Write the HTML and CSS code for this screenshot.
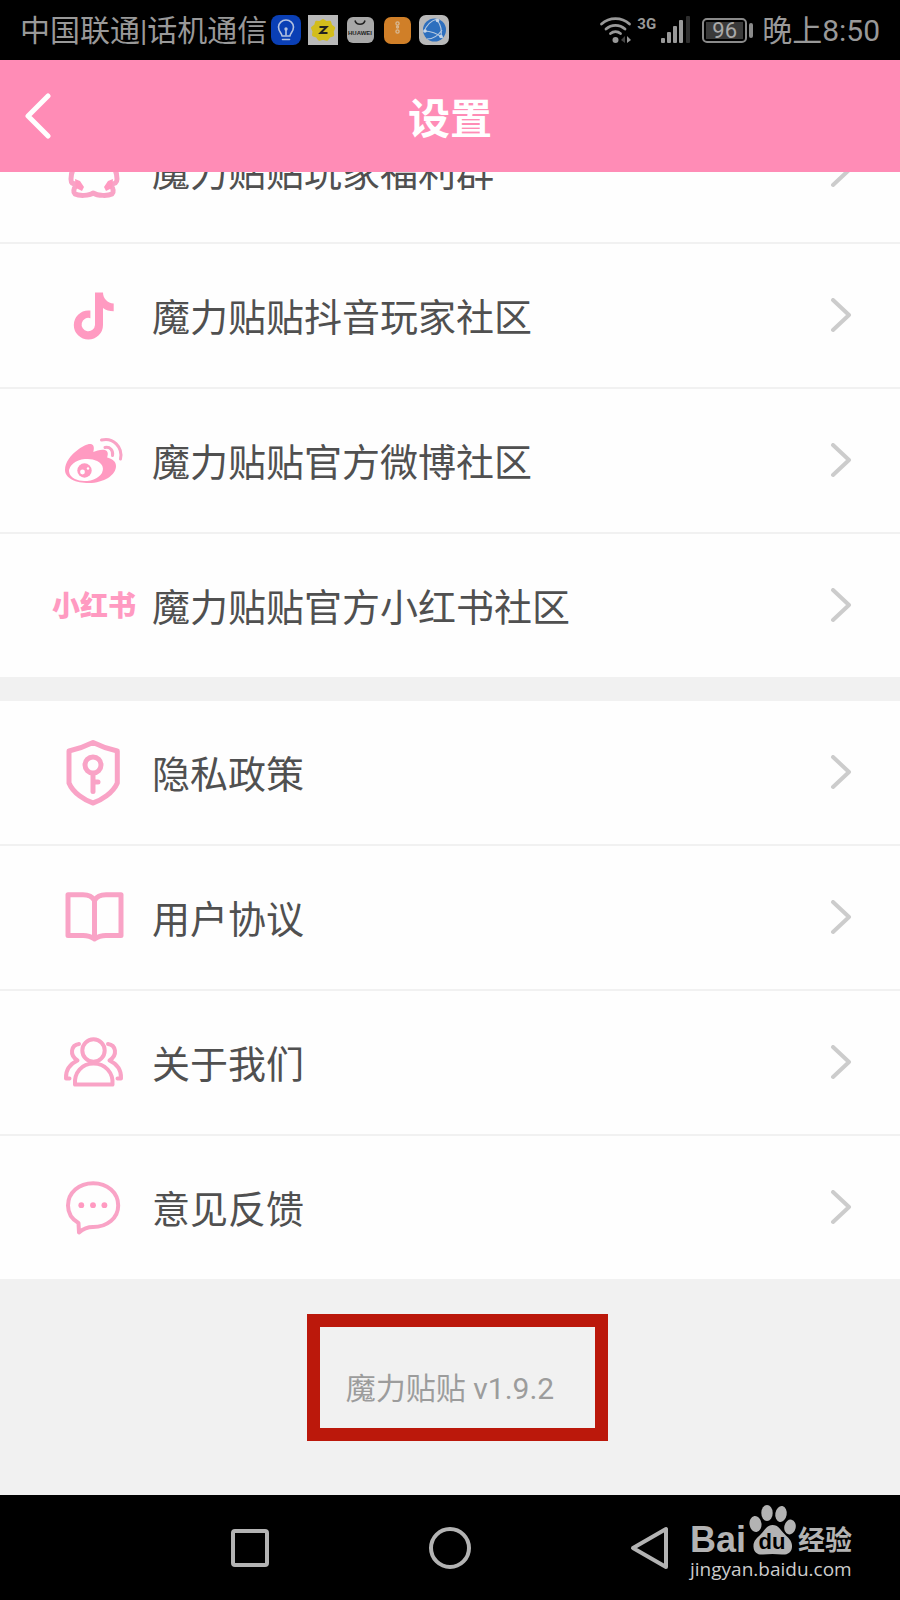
FILE: index.html
```html
<!DOCTYPE html>
<html lang="zh-CN">
<head>
<meta charset="utf-8">
<meta name="viewport" content="width=device-width, initial-scale=1">
<title>设置</title>
<link rel="stylesheet" href="styles.css">
</head>
<body>
<div class="status">
  <div class="status-side">
    <span class="carrier">中国联通|话机通信</span>
    <div class="apps">
      <svg width="30" height="30" viewBox="0 0 30 30"><rect width="30" height="30" rx="8" fill="#0a3fb5"/><g fill="none" stroke="#b4c2e0" stroke-width="1.6" stroke-linecap="round" stroke-linejoin="round"><path d="M11 21c0-3-3.500-4-3.500-9a7.500 7 0 0 1 15 0c0 5-3.500 6-3.500 9z"/><path d="M11.500 24.500h7M15 20v-5"/></g><circle cx="15" cy="14" r="1.700" fill="#b4c2e0"/></svg>
      <svg width="30" height="30" viewBox="0 0 30 30"><path fill="#b9b9b9" d="M0 0h30v30H0z"/><path fill="#d3bd1c" stroke="#d3bd1c" stroke-width="3" stroke-linejoin="round" d="M15 5.500l3 2 3.700-.2 1 3.500 3 2.200-1.500 3.400.5 3.600-3.500 1.200-2.400 3-3.800-1-3.800 1-2.200-3-3.500-1.200.5-3.600L4.500 13l3-2.200 1-3.500 3.500.2z"/><path d="M11.500 12h7l-6 6h7" fill="none" stroke="#222" stroke-width="2"/></svg>
      <svg width="30" height="30" viewBox="0 0 30 30"><rect x="2" y="2" width="27" height="26" rx="6" fill="#a8a8a8"/><path d="M10 5.500a5.200 5.200 0 0 0 10 0" fill="none" stroke="#222" stroke-width="1.600"/><text class="app-name" x="15" y="20" text-anchor="middle" fill="#222">HUAWEI</text></svg>
      <svg width="30" height="30" viewBox="0 0 30 30"><rect x="2" y="2" width="27" height="27" rx="7" fill="#d07f28"/><g fill="none" stroke="#d8b893" stroke-width="1.300"><circle cx="15.500" cy="8.500" r="1.600"/><circle cx="15.500" cy="12" r="1"/><circle cx="15.500" cy="16.500" r="1.600"/></g></svg>
      <svg width="30" height="30" viewBox="0 0 30 30"><rect width="30" height="30" rx="7" fill="#b9b9b9"/><circle cx="15.500" cy="15" r="11.500" fill="#2d6fbe"/><g fill="none" stroke="#b4c8e0" stroke-width="1.200"><path d="M18 4c-7 2-11 7-13 13M5 16c7 0 14 3 19 7M18 5c4 5 5 11 4 17M8 24c5 0 11-3 15-9"/></g><g fill="#c5d5e8"><circle cx="18.500" cy="5.500" r="1.800"/><circle cx="6" cy="16" r="1.800"/><circle cx="22" cy="21.500" r="1.800"/></g></svg>
    </div>
  </div>
  <div class="status-side">
    <div class="signals">
      <svg width="34" height="30" viewBox="0 0 34 30"><g fill="none" stroke="#999" stroke-width="2.800" stroke-linecap="round"><path d="M2.500 9a21 21 0 0 1 28 0M7 14a14 14 0 0 1 19 0M11.500 18.500a8 8 0 0 1 10 0"/></g><circle cx="16.500" cy="25" r="3" fill="#999"/><path fill="#444" d="M26 21v7l-4-3z"/><path fill="#999" d="M28 21v7l4-3z"/></svg>
      <span class="net">3G</span>
      <svg width="30" height="30" viewBox="0 0 30 30"><g fill="#999"><rect x="1" y="23" width="4" height="5" rx="1"/><rect x="7" y="17" width="4" height="11" rx="1"/><rect x="13" y="11" width="4" height="17" rx="1"/><rect x="19" y="5" width="4" height="23" rx="1"/></g><rect x="26" y="1" width="4" height="27" rx="1" fill="#2e2e2e"/></svg>
    </div>
    <div class="battery"><span>96</span></div>
    <time>晚上8:50</time>
  </div>
</div>

<header class="bar">
  <button class="back" type="button" aria-label="返回"><svg width="28" height="46" viewBox="0 0 28 46"><path d="M24 3L4 23l20 20" fill="none" stroke="#fff" stroke-width="5" stroke-linecap="round" stroke-linejoin="round"/></svg></button>
  <h1>设置</h1>
</header>

<main class="view">
  <ul class="group scrolled">
    <li><a class="row" href="#group">
      <span class="icon"><svg width="64" height="72" viewBox="0 0 64 72"><path class="line" d="M32 6C20 6 16 15 16 25 12 31 9 36 9 44c0 4 1 5 6 5-3 4-4 8-2 10 4 2 14 2 18-1 5 3 15 3 19 1 2-2 1-6-2-10 5 0 7-1 7-5 0-8-3-13-7-19C48 15 44 6 32 6z"/><path class="solid" d="M13 44l5 2 4 6-2 4-6-3zM51 44l-5 2-4 6 2 4 6-3z"/></svg></span>
      <span class="label">魔力贴贴玩家福利群</span>
      <svg class="go" width="22" height="36" viewBox="0 0 22 36"><path d="M3 2l16 15L3 32"/></svg></a></li>
    <li><a class="row" href="#douyin">
      <span class="icon"><svg width="64" height="72" viewBox="0 0 64 72"><path class="solid" d="M33 12.500h8c0 6 4.500 10.500 10.700 11v7.800c-4 0-8-1.200-10.700-3.300V45a14.600 14.600 0 1 1-14.600-14.600l2 .1v7.700a6.700 6.700 0 1 0 4.600 6.800z"/></svg></span>
      <span class="label">魔力贴贴抖音玩家社区</span>
      <svg class="go" width="22" height="36" viewBox="0 0 22 36"><path d="M3 2l16 15L3 32"/></svg></a></li>
    <li><a class="row" href="#weibo">
      <span class="icon"><svg width="64" height="72" viewBox="0 0 64 72"><path class="solid" d="M3 45C3 37 9 30 15 25.500c6-4.500 12-7.500 15-6 2.500 1.200 2 5 1.300 7.500 4-2 11-3.500 13.500-1 1.600 1.700 1 4 .3 6.500C50 34 54 36 54 41c0 9-12 17-27 17C14 58 3 53.500 3 45z"/><ellipse cx="24" cy="45" rx="17" ry="11" transform="rotate(-6 24 45)" fill="#fff"/><circle class="solid" cx="22.500" cy="45.500" r="7.200"/><circle cx="20.500" cy="47" r="2.400" fill="#fff"/><circle cx="26" cy="43.500" r="1.200" fill="#fff"/><path class="line thin" d="M43 22.500c5-1 8.500 3 7.500 8M39.500 15C51 12 61 22 58.500 34"/></svg></span>
      <span class="label">魔力贴贴官方微博社区</span>
      <svg class="go" width="22" height="36" viewBox="0 0 22 36"><path d="M3 2l16 15L3 32"/></svg></a></li>
    <li><a class="row" href="#xiaohongshu">
      <span class="icon brand">小红书</span>
      <span class="label">魔力贴贴官方小红书社区</span>
      <svg class="go" width="22" height="36" viewBox="0 0 22 36"><path d="M3 2l16 15L3 32"/></svg></a></li>
  </ul>

  <ul class="group">
    <li><a class="row" href="#privacy">
      <span class="icon"><svg width="64" height="72" viewBox="0 0 64 72"><g class="line"><path d="M31 5.500C24 9 14 12.500 7 14v32c4 10 16 17.500 24 20 8-2.500 20-10 24.300-20V14C48 12.500 38 9 31 5.500z"/><circle cx="31" cy="28" r="8"/><path d="M31 36.500v18M31 45h5"/></g></svg></span>
      <span class="label">隐私政策</span>
      <svg class="go" width="22" height="36" viewBox="0 0 22 36"><path d="M3 2l16 15L3 32"/></svg></a></li>
    <li><a class="row" href="#terms">
      <span class="icon"><svg width="64" height="72" viewBox="0 0 64 72"><path class="line" d="M32.500 18.500C30 14 26 12.800 21 12.800H6v40.700h15c5 0 8 1 11.500 3.500C36 54.500 39 53.500 44 53.500h15V12.800H44c-5 0-9 1.200-11.500 5.700zV56"/></svg></span>
      <span class="label">用户协议</span>
      <svg class="go" width="22" height="36" viewBox="0 0 22 36"><path d="M3 2l16 15L3 32"/></svg></a></li>
    <li><a class="row" href="#about">
      <span class="icon"><svg width="64" height="72" viewBox="0 0 64 72"><g class="line people"><circle cx="31.500" cy="23.500" r="11.200"/><path d="M13 57.500c-1-12 7-21 18.500-21s20 9 19 21z"/><path d="M17 17c-8 1-10 11-1.500 16.500C8 37 3.500 43 4 51.500h3.500M46 17c8 1 10 11 1.500 16.500C55 37 59.500 43 59 51.500h-3.500"/></g></svg></span>
      <span class="label">关于我们</span>
      <svg class="go" width="22" height="36" viewBox="0 0 22 36"><path d="M3 2l16 15L3 32"/></svg></a></li>
    <li><a class="row" href="#feedback">
      <span class="icon"><svg width="64" height="72" viewBox="0 0 64 72"><path class="line people" d="M16.500 51C9.500 47 6 40.500 6 33.500c0-13 11-22.300 25.200-22.300s25 9.600 25 22.300S45 55 31 55c-6 0-10 2-14 5.500z"/><g class="solid"><circle cx="19.300" cy="33.200" r="2.900"/><circle cx="31" cy="33.200" r="2.900"/><circle cx="42.400" cy="33.200" r="2.900"/></g></svg></span>
      <span class="label">意见反馈</span>
      <svg class="go" width="22" height="36" viewBox="0 0 22 36"><path d="M3 2l16 15L3 32"/></svg></a></li>
  </ul>

  <footer class="version">
    <p>魔力贴贴 v1.9.2</p>
    <div class="mark"></div>
  </footer>
</main>

<nav class="keys">
  <button type="button" aria-label="最近任务"><svg width="44" height="44" viewBox="0 0 44 44"><rect x="5" y="5" width="34" height="34" rx="2"/></svg></button>
  <button type="button" aria-label="主屏幕"><svg width="44" height="44" viewBox="0 0 44 44"><circle cx="22" cy="22" r="19"/></svg></button>
  <button type="button" aria-label="返回"><svg width="44" height="44" viewBox="0 0 44 44"><path d="M38 3v38L5 22z"/></svg></button>
  <div class="watermark">
    <div class="wm-top">
      <span class="wm-bai">Bai</span>
      <span class="wm-paw"><svg width="48" height="52" viewBox="0 0 48 52"><g fill="#b3b3b3"><ellipse cx="7.500" cy="20" rx="6" ry="8" transform="rotate(-8 7.500 20)"/><ellipse cx="19" cy="9" rx="5.700" ry="8"/><ellipse cx="33" cy="10" rx="5.700" ry="8" transform="rotate(10 33 10)"/><ellipse cx="42" cy="23" rx="5.700" ry="7.500" transform="rotate(12 42 23)"/><path d="M24.500 21c6 0 8 5 12 9s8 7 7.500 13c-.5 6-5 8-10 7.500-6-.8-13-.8-19 0C10 51 6 49 5.500 43 5 37 9 34 13 30s6-9 11.500-9z"/></g></svg><span class="wm-du">du</span></span>
      <span class="wm-exp">经验</span>
    </div>
    <span class="wm-url">jingyan.baidu.com</span>
  </div>
</nav>
</body>
</html>
```
FILE: styles.css
```css
* {
  box-sizing: border-box;
}

body {
  margin: 0;
  min-height: 100vh;
  display: flex;
  flex-direction: column;
  background: #000;
  font-family: Roboto, "Noto Sans CJK SC", sans-serif;
}

h1,
p,
ul {
  margin: 0;
  padding: 0;
  list-style: none;
}

svg {
  display: block;
  flex: none;
}

button {
  padding: 0;
  border: 0;
  background: none;
}

/* Status bar */
.status {
  height: 60px;
  padding: 0 20px;
  display: flex;
  align-items: center;
  justify-content: space-between;
  color: #999;
  font-size: 30px;
  line-height: 40px;
  white-space: nowrap;
}

.carrier,
.status time {
  padding-top: 2px;
}

.status-side {
  display: flex;
  align-items: center;
  gap: 12px;
}

.status-side:first-child {
  gap: 4px;
}

.apps {
  display: flex;
  gap: 7px;
}

.app-name {
  font: bold 6px "Liberation Sans", sans-serif;
}

.signals {
  display: flex;
  gap: 4px;
}

.net {
  height: 18px;
  font-size: 15px;
  line-height: 18px;
  font-weight: 700;
}

.battery {
  position: relative;
  width: 45px;
  height: 25px;
  padding: 2px;
  border: 2px solid #8a8a8a;
  border-radius: 5px;
  margin-right: 3px;
}

.battery span {
  display: block;
  background: #3a3a3a;
  color: #aaa;
  font-size: 22px;
  line-height: 17px;
  text-align: center;
}

.battery::after {
  content: "";
  position: absolute;
  right: -8px;
  top: 3px;
  width: 4px;
  height: 15px;
  border-radius: 2px;
  background: #8a8a8a;
}

/* Title bar */
.bar {
  position: relative;
  z-index: 1;
  height: 112px;
  padding: 0 24px;
  display: grid;
  grid-template-columns: 1fr auto 1fr;
  align-items: center;
  background: #ff8cb6;
  color: #fff;
}

.back {
  justify-self: start;
}

.bar h1 {
  padding-top: 8px;
  font-size: 42px;
  line-height: 60px;
  font-weight: 700;
}

/* Settings list */
.view {
  flex: 1;
  display: flex;
  flex-direction: column;
  background: #f1f1f1;
}

.group {
  background: #fefefe;
}

.group + .group {
  margin-top: 24px;
}

.scrolled {
  margin-top: -73px;
}

.group li + li {
  border-top: 2px solid #f1f1f1;
}

.row {
  display: flex;
  align-items: center;
  gap: 12px;
  height: 143px;
  padding: 0 48px;
  color: #505050;
  text-decoration: none;
}

.icon {
  width: 92px;
  flex: none;
  display: flex;
  justify-content: center;
}

.brand {
  padding-top: 2px;
  color: #ff9ac1;
  font-size: 28px;
  line-height: 40px;
  font-weight: 900;
}

.label {
  flex: 1;
  padding-top: 4px;
  font-size: 38px;
  line-height: 56px;
}

.line {
  fill: none;
  stroke: #f9a3c6;
  stroke-width: 5;
  stroke-linecap: round;
  stroke-linejoin: round;
}

.people {
  stroke-width: 4;
}

.thin {
  stroke-width: 3;
}

.solid {
  fill: #ff9ac1;
}

.go {
  fill: none;
  stroke: #ccc;
  stroke-width: 4;
  stroke-linecap: round;
  stroke-linejoin: round;
}

/* Version */
.version {
  position: relative;
  flex: 1;
  min-height: 216px;
  padding-top: 4px;
  display: flex;
  align-items: center;
  justify-content: center;
  color: #9c9c9c;
  font-size: 30px;
  line-height: 44px;
}

.mark {
  position: absolute;
  top: 35px;
  left: calc(50% - 143px);
  width: 301px;
  height: 127px;
  border: 13px solid #bb180b;
}

/* Navigation keys */
.keys {
  position: relative;
  height: 105px;
  display: flex;
  align-items: center;
  justify-content: center;
  gap: 156px;
}

.keys button svg {
  fill: none;
  stroke: #b3b3b3;
  stroke-width: 4;
  stroke-linejoin: round;
}

.watermark {
  position: absolute;
  right: 48px;
  bottom: 18px;
  width: 162px;
  color: #b3b3b3;
  white-space: nowrap;
}

.wm-top {
  display: flex;
  align-items: flex-end;
  justify-content: space-between;
}

.wm-bai {
  font: bold 36px/32px "Liberation Sans", sans-serif;
}

.wm-paw {
  position: relative;
}

.wm-du {
  position: absolute;
  left: 0;
  right: 0;
  bottom: 2px;
  color: #000;
  font: bold 22px/24px "Liberation Sans", sans-serif;
  text-align: center;
}

.wm-exp {
  font-size: 27px;
  line-height: 30px;
  font-weight: 700;
}

.wm-url {
  display: block;
  color: #ccc;
  font: 19px/26px "Open Sans", sans-serif;
}
```
